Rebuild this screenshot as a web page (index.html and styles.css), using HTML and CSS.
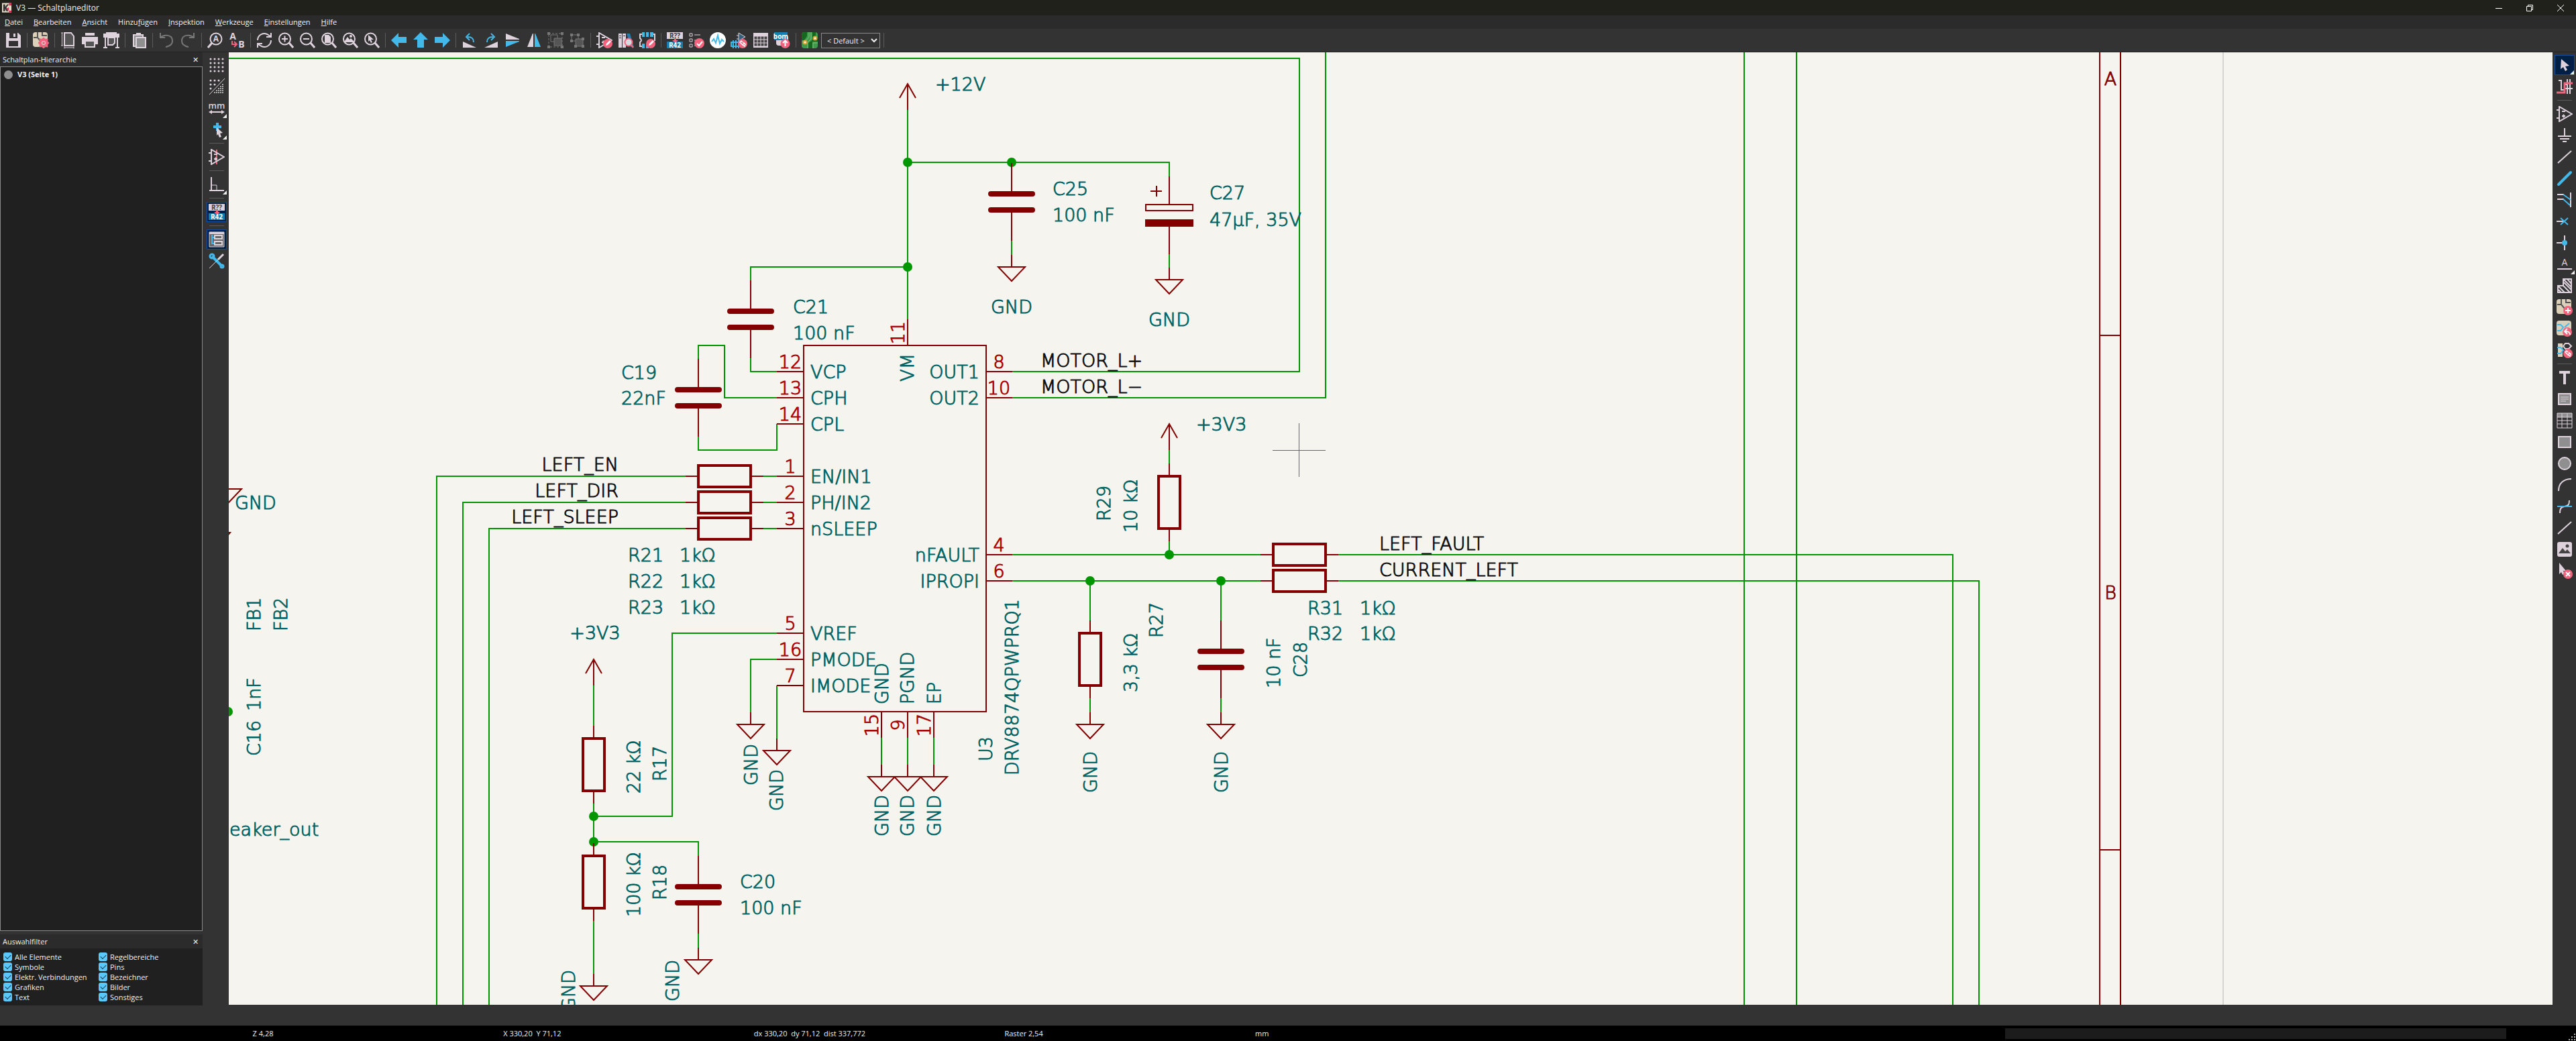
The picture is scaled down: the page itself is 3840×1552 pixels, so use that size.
FILE: index.html
```html
<!DOCTYPE html>
<html lang="de">
<head>
<meta charset="utf-8">
<title>V3 — Schaltplaneditor</title>
<link rel="stylesheet" href="styles.css">
</head>
<body>
<svg class="defs" aria-hidden="true">
  <defs>
    <symbol id="opamp" viewBox="0 0 24 24"><path class="l" d="M4 1v22L23 12zM0 6h4M0 18h4M8 8h5M8 15h5M10.500 12.500v5"/></symbol>
    <symbol id="lens" viewBox="0 0 24 24"><circle class="l" cx="13" cy="10" r="8.500"/><path class="l3" d="M7 16l-6 7"/></symbol>
    <symbol id="lensr" viewBox="0 0 24 24"><circle class="l" cx="10.500" cy="10" r="8.500"/><path class="l3" d="M17 16l6 7"/></symbol>
    <symbol id="annot" viewBox="0 0 24 24"><path class="lf" d="M0 0h24v10H0z"/><path fill="#147fb0" d="M0 14h24v10H0z"/><path class="rf" d="M11 9h3v3h3l-4.500 4L8 12h3z"/><text class="t10 dark" x="12" y="9">R??</text><text class="t10 white" x="12" y="23">R42</text></symbol>
    <symbol id="sheet" viewBox="0 0 24 24"><rect class="bf" width="22" height="22" rx="4"/><path fill="none" stroke="#555" stroke-width="2" d="M7 0v8H1M7 8l5 6h9M14 0v5h7"/></symbol>
    <symbol id="pencil" viewBox="0 0 24 24"><circle class="rf" cx="17" cy="17" r="7"/><path d="M14 20l1-3 5-5 2 2-5 5z" fill="#fff"/></symbol>
    <symbol id="chain" viewBox="0 0 24 24"><circle class="rf" cx="17" cy="17" r="7"/><path fill="none" stroke="#fff" stroke-width="1.500" d="M17 15l-2-2-2 2 4 4 2-2-1-1M17 19l3 2 1-3-3-3"/></symbol>
    <symbol id="pointer" viewBox="0 0 24 24"><path class="lf" d="M7 3l12 10-6 1 3 5-3 2-3-6-4 3z"/></symbol>
    <symbol id="diag" viewBox="0 0 24 24"><path class="l" d="M2 21L22 3"/></symbol>
    <g id="arrow"><path class="sym" d="M0 39V0M-12 21L0 0L12 21"/></g>
    <g id="gnd"><path class="sym" d="M0 0V18M-20 18H20L0 39Z"/></g>
    <g id="cap"><path class="sym" d="M0-58V-12M0 12V58"/><path class="plate" d="M-31-12H31M-31 12H31"/></g>
    <g id="resh"><path class="sym" d="M-58 0H-39M39 0H58"/><rect class="body" x="-39" y="-16" width="78" height="32"/></g>
    <g id="resv"><path class="sym" d="M0-58V-39M0 39V58"/><rect class="body" x="-16" y="-39" width="32" height="78"/></g>
  </defs>
</svg>

<header class="titlebar">
  <svg class="appicon" viewBox="0 0 16 16"><path fill="#e8dcc8" d="M0 0h15v15H0z"/><path fill="#333" d="M2 2h3v4l3-4h3L7 7l3 6H7L5 9v4H2z"/><path fill="#d8305a" d="M11 0h4v4h-4zM6 9l5-2 0 5zM11 12h4v3h-4z"/></svg>
  <h1 class="title">V3 — Schaltplaneditor</h1>
  <div class="winctl">
    <button type="button" aria-label="Minimieren"><svg viewBox="0 0 10 10"><path d="M0 5.500h10"/></svg></button>
    <button type="button" aria-label="Wiederherstellen"><svg viewBox="0 0 10 10"><path d="M.5 2.500h7v7h-7zM2.500 2V.5h7v7H8"/></svg></button>
    <button type="button" aria-label="Schließen"><svg viewBox="0 0 10 10"><path d="M0 0l10 10M10 0L0 10"/></svg></button>
  </div>
</header>

<nav class="menubar">
  <button type="button"><u>D</u>atei</button>
  <button type="button"><u>B</u>earbeiten</button>
  <button type="button"><u>A</u>nsicht</button>
  <button type="button">Hinzu<u>f</u>ügen</button>
  <button type="button"><u>I</u>nspektion</button>
  <button type="button"><u>W</u>erkzeuge</button>
  <button type="button"><u>E</u>instellungen</button>
  <button type="button"><u>H</u>ilfe</button>
</nav>

<div class="toolbar" role="toolbar">
  <button type="button" class="tool" aria-label="Speichern"><svg viewBox="0 0 24 24"><path class="lf" d="M1 1h18l4 4v18H1z"/><path fill="#333" d="M6 1h12v8H6zM5 13h14v8H5z"/><path class="lf" d="M12 2h3v5h-3z"/></svg></button>
  <span class="sep"></span>
  <button type="button" class="tool" aria-label="Schaltplan einrichten"><svg viewBox="0 0 24 24"><use href="#sheet"/><circle cx="16" cy="16" r="5" fill="#ddd" stroke="#f2647e" stroke-width="4"/><path stroke="#f2647e" stroke-width="2.500" d="M16 8v3M16 21v3M8 16h3M21 16h3M10 10l2 2M20 20l2 2M22 10l-2 2M12 20l-2 2"/><circle class="rf" cx="16" cy="16" r="2"/></svg></button>
  <span class="sep"></span>
  <button type="button" class="tool" aria-label="Seite einrichten"><svg viewBox="0 0 24 24"><path class="l" fill="#555" d="M6 1h10l4 5v14H6z"/><path class="l1" d="M1 1h3M1 20h3M2.500 1v19M6 21.500v3M20 21.500v3M6 23h14"/></svg></button>
  <button type="button" class="tool" aria-label="Drucken"><svg viewBox="0 0 24 24"><path class="lf" d="M5 1h14v4H5zM0 7h24v11H0z"/><path class="l" fill="#555" d="M5 13h14v9H5z"/></svg></button>
  <button type="button" class="tool" aria-label="Plotten"><svg viewBox="0 0 24 24"><path class="lf" d="M0 2h24v6H0zM4 0h16v3H4z"/><path class="l" fill="#555" d="M7 8h10v8l-3 3H7z"/><path class="l" d="M3 8v15M21 8v15M0 23h6M18 23h6"/></svg></button>
  <span class="sep"></span>
  <button type="button" class="tool" aria-label="Einfügen"><svg viewBox="0 0 24 24"><path class="l" fill="#8f8f8f" d="M4 4h14v17H4z"/><path class="lf" d="M8 1h7v4H8z"/><path class="l" fill="#8f8f8f" d="M8 8h14v15H8z"/></svg></button>
  <span class="sep"></span>
  <button type="button" class="tool" aria-label="Rückgängig"><svg viewBox="0 0 24 24"><path class="g" d="M3 1v7h7M3 8c5-5 18-5 18 5 0 6-5 8-10 9"/></svg></button>
  <button type="button" class="tool" aria-label="Wiederholen"><svg viewBox="0 0 24 24"><path class="g" d="M21 1v7h-7M21 8C16 3 3 3 3 13c0 6 5 8 10 9"/></svg></button>
  <span class="sep"></span>
  <button type="button" class="tool" aria-label="Suchen"><svg viewBox="0 0 24 24"><use href="#lens"/><text class="t12 light" x="13" y="14">A</text></svg></button>
  <button type="button" class="tool" aria-label="Suchen und Ersetzen"><svg viewBox="0 0 24 24"><text class="t14 light" x="6" y="11">A</text><text class="t14 light" x="19" y="23">B</text><path fill="none" stroke="#f2647e" stroke-width="2" d="M5 13v5h6M8 14l4 4-4 4"/></svg></button>
  <span class="sep"></span>
  <button type="button" class="tool" aria-label="Aktualisieren"><svg viewBox="0 0 24 24"><path class="l" d="M2 12C2 5 9 0 16 3l5 3M22 1v6h-7M22 12c0 7-7 12-14 9l-5-3M2 23v-6h7"/></svg></button>
  <button type="button" class="tool" aria-label="Vergrößern"><svg viewBox="0 0 24 24"><use href="#lensr"/><path class="l" d="M6 10h9M10.500 5.500v9"/></svg></button>
  <button type="button" class="tool" aria-label="Verkleinern"><svg viewBox="0 0 24 24"><use href="#lensr"/><path class="l" d="M6 10h9"/></svg></button>
  <button type="button" class="tool" aria-label="Seite einpassen"><svg viewBox="0 0 24 24"><use href="#lensr"/><path class="lf" d="M6 4h6l3 3v9H6z"/></svg></button>
  <button type="button" class="tool" aria-label="Objekte einpassen"><svg viewBox="0 0 24 24"><use href="#lensr"/><path class="lf" d="M4 13l4-6 3 4 2-2 4 4v2H4z"/><circle class="lf" cx="13" cy="6" r="2"/></svg></button>
  <button type="button" class="tool" aria-label="Auswahl einpassen"><svg viewBox="0 0 24 24"><use href="#lensr"/><path class="lf" d="M7 4l8 7-4 0 2 4-2 1-2-4-2 2z"/></svg></button>
  <span class="sep"></span>
  <button type="button" class="tool" aria-label="Zurück"><svg viewBox="0 0 24 24"><path class="cf" d="M0 12L11 1v6h12v9H11v7z"/></svg></button>
  <button type="button" class="tool" aria-label="Nach oben"><svg viewBox="0 0 24 24"><path class="cf" d="M12 0L23 11h-6v12H7V11H1z"/></svg></button>
  <button type="button" class="tool" aria-label="Vorwärts"><svg viewBox="0 0 24 24"><path class="cf" d="M24 12L13 1v6H1v9h12v7z"/></svg></button>
  <span class="sep"></span>
  <button type="button" class="tool" aria-label="Gegen Uhrzeigersinn drehen"><svg viewBox="0 0 24 24"><path class="lf" d="M2 14v9h20z"/><path class="c" d="M18 15c0-6-3-8-9-8M12 2L7 7l5 5"/></svg></button>
  <button type="button" class="tool" aria-label="Im Uhrzeigersinn drehen"><svg viewBox="0 0 24 24"><path class="lf" d="M22 14v9H2z"/><path class="c" d="M6 15c0-6 3-8 9-8M12 2l5 5-5 5"/></svg></button>
  <button type="button" class="tool" aria-label="Vertikal spiegeln"><svg viewBox="0 0 24 24"><path class="lf" d="M2 2l20 8v1H2z"/><path class="cf" d="M2 22l20-8v-1H2z"/></svg></button>
  <button type="button" class="tool" aria-label="Horizontal spiegeln"><svg viewBox="0 0 24 24"><path class="lf" d="M2 22l8-20h1v20z"/><path class="cf" d="M22 22L14 2h-1v20z"/></svg></button>
  <button type="button" class="tool" aria-label="Gruppieren"><svg viewBox="0 0 24 24"><path class="gd" d="M2 2h20v20H2z"/><path class="g1" d="M5 4h10v10H5z"/><path class="g1" fill="#555" d="M10 9h11v11H10z"/><path class="gf" d="M0 0h4v4H0zM20 0h4v4h-4zM0 20h4v4H0zM20 20h4v4h-4z"/></svg></button>
  <button type="button" class="tool" aria-label="Gruppierung aufheben"><svg viewBox="0 0 24 24"><path class="g1" d="M4 4h10v9H4z"/><path class="g1" fill="#555" d="M10 10h11v11H10z"/><path class="gf" d="M2 2h4v4H2zM12 2h4v4h-4zM2 11h4v4H2zM19 8h4v4h-4zM8 19h4v4H8zM19 19h4v4h-4z"/></svg></button>
  <span class="sep"></span>
  <button type="button" class="tool" aria-label="Symboleditor"><svg viewBox="0 0 24 24"><use href="#opamp"/><use href="#pencil"/></svg></button>
  <button type="button" class="tool" aria-label="Symbolbibliothek"><svg viewBox="0 0 24 24"><path class="lf" d="M1 2h5v21H1zM7 2h5v21H7z"/><path fill="#333" d="M2 5h3v1H2zM8 5h3v1H8zM2 8h3v1H2z"/><path fill="#1c7fae" d="M13 2h5l6 20h-5z"/><circle cx="16" cy="15" r="5.500" fill="#d5dbe2" stroke="#f2647e" stroke-width="2"/><path stroke="#f2647e" stroke-width="2.500" d="M20 19l3 4"/></svg></button>
  <button type="button" class="tool" aria-label="Footprinteditor"><svg viewBox="0 0 24 24"><path class="cf" d="M4 0h4v7H4zM10 0h4v7h-4zM16 0h5v7h-5zM4 17h4v7H4zM10 17h4v7h-4z"/><path class="l" d="M4 3H1v6q4 3 0 6v6h3M21 3h2v10"/><use href="#pencil"/></svg></button>
  <span class="sep"></span>
  <button type="button" class="tool" aria-label="Annotieren"><svg viewBox="0 0 24 24"><use href="#annot"/></svg></button>
  <button type="button" class="tool" aria-label="ERC"><svg viewBox="0 0 24 24"><path class="l1" d="M2 2h4v4H2zM2 10h4v4H2zM2 18h4v4H2zM9 4h9M9 12h5M9 20h4"/><circle class="rf" cx="16.500" cy="16.500" r="7.500"/><path fill="none" stroke="#fff" stroke-width="2" d="M13 17l3 3 5-6"/></svg></button>
  <button type="button" class="tool" aria-label="Simulator"><svg viewBox="0 0 24 24"><circle cx="12" cy="12" r="12" fill="#fff"/><path class="c1" d="M3 14l3-4 3 6 3-11 3 12 3-6 3 3"/></svg></button>
  <button type="button" class="tool" aria-label="Footprints zuweisen"><svg viewBox="0 0 24 24"><path class="l1" fill="#35607a" d="M11 1v12l10-6zM8 5h3M8 10h3"/><path class="cf" d="M2 12h2v12H2zM6 12h2v12H6zM10 12h2v12h-2z"/><path class="c1" d="M0 15h12v6H0z"/><use href="#chain"/></svg></button>
  <button type="button" class="tool" aria-label="Symbolfelder bearbeiten"><svg viewBox="0 0 24 24"><path class="lf" d="M1 1h22v22H1z"/><path fill="none" stroke="#444" stroke-width="4" stroke-dasharray="4 1" d="M2.500 8.500h19M2.500 13.500h19M2.500 18.500h19"/></svg></button>
  <button type="button" class="tool" aria-label="Stückliste"><svg viewBox="0 0 24 24"><rect class="lf" x="3" y="5" width="18" height="15" rx="4"/><path fill="#147fb0" d="M0 0h20v12H0z"/><text class="t10 white" x="10" y="10">bom</text><circle class="rf" cx="16.500" cy="17" r="7"/><path fill="none" stroke="#fff" stroke-width="2" d="M16.500 21v-8M13 16l3.500-3.500L20 16"/></svg></button>
  <span class="sep"></span>
  <button type="button" class="tool" aria-label="Leiterplatteneditor"><svg viewBox="0 0 24 24"><rect width="24" height="24" rx="4" fill="#3f9a4c"/><path fill="#15691f" d="M0 4q0-4 4-4h4v6L4 12H0zM10 24v-8l6-4V0h5v8h3v6h-8v10z"/><path fill="none" stroke="#7cc07a" d="M11 0v7l-5 6M14 0v10l-5 5v9M17 24v-8h7"/><circle cx="5" cy="15" r="2.500" fill="#fff" stroke="#e0a030" stroke-width="2"/><circle cx="20" cy="9" r="2.500" fill="#fff" stroke="#e0a030" stroke-width="2"/></svg></button>
  <select class="variant" aria-label="Variante"><option>&lt; Default &gt;</option></select>
  <span class="sep"></span>
</div>

<main class="work">
  <aside class="panels">
    <section class="panel tree-panel">
      <header class="caption"><h2>Schaltplan-Hierarchie</h2><button type="button" aria-label="Schließen">✕</button></header>
      <ul class="tree"><li><span class="bullet"></span>V3 (Seite 1)</li></ul>
    </section>
    <section class="panel">
      <header class="caption"><h2>Auswahlfilter</h2><button type="button" aria-label="Schließen">✕</button></header>
      <div class="filters">
        <label><input type="checkbox" checked>Alle Elemente</label>
        <label><input type="checkbox" checked>Regelbereiche</label>
        <label><input type="checkbox" checked>Symbole</label>
        <label><input type="checkbox" checked>Pins</label>
        <label><input type="checkbox" checked>Elektr. Verbindungen</label>
        <label><input type="checkbox" checked>Bezeichner</label>
        <label><input type="checkbox" checked>Grafiken</label>
        <label><input type="checkbox" checked>Bilder</label>
        <label><input type="checkbox" checked>Text</label>
        <label><input type="checkbox" checked>Sonstiges</label>
      </div>
    </section>
  </aside>

  <div class="sidebar left" role="toolbar">
    <button type="button" class="tool" aria-label="Raster"><svg viewBox="0 0 24 24"><path class="dots" d="M3 3h21M3 9h21M3 15h21M3 21h21"/></svg></button>
    <button type="button" class="tool" aria-label="Rasterüberschreibung"><svg viewBox="0 0 24 24"><path class="dots" d="M3 3h13M3 9h8M3 15h2"/><path class="l1" d="M1 24L24 0"/><path fill="none" stroke="#aaa" stroke-width="2" stroke-dasharray="2 1" d="M20 9h3M17 12h6M14 15h9M11 18h12M8 21h15"/></svg></button>
    <button type="button" class="tool more" aria-label="Einheiten"><svg viewBox="0 0 24 24"><text class="t13 light" x="12" y="13">mm</text><path class="l" d="M2 18h20"/><path class="lf" d="M0 18l5-3v6zM24 18l-5-3v6z"/></svg></button>
    <button type="button" class="tool more" aria-label="Fadenkreuz"><svg viewBox="0 0 24 24"><path class="c3" d="M7 8h12M13 2v12"/><path class="lf" d="M12 9l9 8-4 1 2 5-3 1-2-5-2 2z"/></svg></button>
    <span class="sep"></span>
    <button type="button" class="tool" aria-label="Versteckte Pins"><svg viewBox="0 0 24 24"><path stroke="#f2647e" stroke-width="2" d="M12 1v22"/><use href="#opamp"/></svg></button>
    <span class="sep"></span>
    <button type="button" class="tool more" aria-label="Linienmodus"><svg viewBox="0 0 24 24"><path class="l" d="M4 1v20M1 21h22"/><path class="l1" d="M4 13h8v8"/></svg></button>
    <span class="sep"></span>
    <button type="button" class="tool on" aria-label="Automatisch annotieren"><svg viewBox="0 0 24 24"><use href="#annot"/></svg></button>
    <span class="sep"></span>
    <button type="button" class="tool on" aria-label="Hierarchie anzeigen"><svg viewBox="0 0 24 24"><path class="l1" fill="#666" d="M1 1h22v22H1z"/><path class="lf" d="M1 1h22v3H1z"/><path class="c" d="M5 5v13h4M5 9h4"/><path class="l" d="M9 6h11v5H9zM9 15h11v5H9z"/></svg></button>
    <button type="button" class="tool" aria-label="Eigenschaften"><svg viewBox="0 0 24 24"><path stroke="#42b8eb" stroke-width="4" d="M5 5l15 15"/><circle cx="5" cy="5" r="3" fill="none" stroke="#42b8eb" stroke-width="3"/><circle cx="20" cy="20" r="2" fill="none" stroke="#42b8eb" stroke-width="3"/><path class="l1" d="M1 23L14 10"/><path class="l3" d="M14 10l8-8"/></svg></button>
  </div>

  <div class="canvas">
    <svg class="schematic" role="img" aria-label="Schaltplan">
      <g transform="translate(-341 -78)">
        <path class="edge" d="M3314 0V4000"/>
        <g class="frame">
          <path d="M3130 0V4000M3161 0V4000M3130 500H3161M3130 1267H3161"/>
        </g>
        <g class="wire">
          <path d="M300 87H1937V554H1509M1976 0V593H1509"/>
          <path d="M2600 0V4000M2678 0V4000"/>
          <path d="M1353 164V476M1353 242H1743V263M1508 359V380M1743 379V400"/>
          <path d="M1353 398H1119V420M1119 534V554H1158"/>
          <path d="M1041 535V515H1080V593H1158M1041 651V671H1158V632"/>
          <path d="M1022 710H651V4000M1022 749H690V4000M1022 788H729V4000"/>
          <path d="M1137 710H1158M1137 749H1158M1137 788H1158"/>
          <path d="M1158 944H1002V1217H885M1158 983H1119V1062M1158 1022V1101"/>
          <path d="M1314 1100V1140M1353 1100V1140M1392 1100V1140"/>
          <path d="M885 1022V1082M885 1196V1257M885 1255H1041V1276M885 1371V1452M1041 1392V1413"/>
          <path d="M1509 827H1879M1995 827H2911V4000M1509 866H1879M1995 866H2950V4000"/>
          <path d="M1743 671V691M1743 806V827M1625 866V925M1625 1041V1062M1820 866V925M1820 1041V1062"/>
        </g>
        <g class="dot">
          <circle cx="1353" cy="242" r="7"/><circle cx="1508" cy="242" r="7"/><circle cx="1353" cy="398" r="7"/>
          <circle cx="885" cy="1217" r="7"/><circle cx="885" cy="1255" r="7"/><circle cx="1743" cy="827" r="7"/>
          <circle cx="1625" cy="866" r="7"/><circle cx="1820" cy="866" r="7"/><circle cx="340" cy="1061" r="7"/>
        </g>
        <rect class="sym" x="1198" y="515" width="272" height="546"/>
        <path class="sym" d="M1353 476V515M1158 554H1198M1158 593H1198M1158 632H1198M1158 710H1198M1158 749H1198M1158 788H1198M1158 944H1198M1158 983H1198M1158 1022H1198M1470 554H1509M1470 593H1509M1470 827H1509M1470 866H1509M1314 1061V1100M1353 1061V1100M1392 1061V1100"/>
        <use href="#arrow" x="1353" y="125"/><use href="#arrow" x="885" y="983"/><use href="#arrow" x="1743" y="632"/>
        <use href="#cap" x="1508" y="301"/><use href="#cap" x="1119" y="476"/><use href="#cap" x="1041" y="593"/>
        <use href="#cap" x="1041" y="1334"/><use href="#cap" x="1820" y="983"/>
        <path class="sym" d="M1743 263V305M1743 338V379M1715 285H1732M1724 277V293M1708 305H1778V314H1708Z"/>
        <path class="solid" d="M1707 327H1779V338H1707Z"/>
        <use href="#resh" x="1080" y="710"/><use href="#resh" x="1080" y="749"/><use href="#resh" x="1080" y="788"/>
        <use href="#resh" x="1937" y="827"/><use href="#resh" x="1937" y="866"/>
        <use href="#resv" x="885" y="1140"/><use href="#resv" x="885" y="1315"/><use href="#resv" x="1743" y="749"/><use href="#resv" x="1625" y="983"/>
        <use href="#gnd" x="1508" y="380"/><use href="#gnd" x="1743" y="399"/><use href="#gnd" x="1119" y="1062"/><use href="#gnd" x="1158" y="1101"/>
        <use href="#gnd" x="1314" y="1140"/><use href="#gnd" x="1353" y="1140"/><use href="#gnd" x="1392" y="1140"/>
        <use href="#gnd" x="885" y="1452"/><use href="#gnd" x="1041" y="1413"/><use href="#gnd" x="1625" y="1062"/><use href="#gnd" x="1820" y="1062"/>
        <use href="#gnd" x="340" y="711"/><path class="sym" d="M338 794H343L338 800"/>

        <g class="field">
          <text x="1394" y="135">+12V</text>
          <text x="1569" y="291">C25</text><text x="1569" y="330">100 nF</text>
          <text x="1803" y="297">C27</text><text x="1803" y="337">47µF, 35V</text>
          <text x="1182" y="467">C21</text><text x="1182" y="506">100 nF</text>
          <text x="926" y="565">C19</text><text x="926" y="603">22nF</text>
          <text x="1508" y="467" class="mid">GND</text><text x="1743" y="486" class="mid">GND</text>
          <text x="1208" y="564">VCP</text><text x="1208" y="603">CPH</text><text x="1208" y="642">CPL</text>
          <text x="1208" y="720">EN/IN1</text><text x="1208" y="759">PH/IN2</text><text x="1208" y="798">nSLEEP</text>
          <text x="1208" y="954">VREF</text><text x="1208" y="993">PMODE</text><text x="1208" y="1032">IMODE</text>
          <text x="1460" y="564" class="end">OUT1</text><text x="1460" y="603" class="end">OUT2</text>
          <text x="1460" y="837" class="end">nFAULT</text><text x="1460" y="876" class="end">IPROPI</text>
          <text x="936" y="837">R21</text><text x="1013" y="837">1kΩ</text>
          <text x="936" y="876">R22</text><text x="1013" y="876">1kΩ</text>
          <text x="936" y="915">R23</text><text x="1013" y="915">1kΩ</text>
          <text x="887" y="953" class="mid">+3V3</text><text x="1783" y="642">+3V3</text>
          <text x="1103" y="1324">C20</text><text x="1103" y="1363">100 nF</text>
          <text x="1949" y="916">R31</text><text x="2027" y="916">1kΩ</text>
          <text x="1949" y="954">R32</text><text x="2027" y="954">1kΩ</text>
          <text x="350" y="759">GND</text><text x="342" y="1246">eaker_out</text>
          <text transform="translate(1362 527) rotate(-90)" class="end">VM</text>
          <text transform="translate(1324 1050) rotate(-90)">GND</text>
          <text transform="translate(1362 1050) rotate(-90)">PGND</text>
          <text transform="translate(1402 1050) rotate(-90)">EP</text>
          <text transform="translate(1479 1135) rotate(-90)">U3</text>
          <text transform="translate(1518 1156) rotate(-90)">DRV8874QPWPRQ1</text>
          <text transform="translate(1129 1140) rotate(-90)" class="mid">GND</text>
          <text transform="translate(1167 1178) rotate(-90)" class="mid">GND</text>
          <text transform="translate(1324 1216) rotate(-90)" class="mid">GND</text>
          <text transform="translate(1362 1216) rotate(-90)" class="mid">GND</text>
          <text transform="translate(1402 1216) rotate(-90)" class="mid">GND</text>
          <text transform="translate(1012 1462) rotate(-90)" class="mid">GND</text>
          <text transform="translate(857 1477) rotate(-90)" class="mid">GND</text>
          <text transform="translate(1635 1151) rotate(-90)" class="mid">GND</text>
          <text transform="translate(1830 1151) rotate(-90)" class="mid">GND</text>
          <text transform="translate(954 1183) rotate(-90)">22 kΩ</text>
          <text transform="translate(993 1165) rotate(-90)">R17</text>
          <text transform="translate(954 1367) rotate(-90)">100 kΩ</text>
          <text transform="translate(993 1342) rotate(-90)">R18</text>
          <text transform="translate(1655 777) rotate(-90)">R29</text>
          <text transform="translate(1695 794) rotate(-90)">10 kΩ</text>
          <text transform="translate(1733 951) rotate(-90)">R27</text>
          <text transform="translate(1695 1032) rotate(-90)">3,3 kΩ</text>
          <text transform="translate(1908 1026) rotate(-90)">10 nF</text>
          <text transform="translate(1948 1010) rotate(-90)">C28</text>
          <text transform="translate(388 941) rotate(-90)">FB1</text>
          <text transform="translate(428 941) rotate(-90)">FB2</text>
          <text transform="translate(388 1127) rotate(-90)">C16</text>
          <text transform="translate(388 1060) rotate(-90)">1nF</text>
        </g>
        <g class="pin mid">
          <text x="1178" y="549">12</text><text x="1178" y="588">13</text><text x="1178" y="627">14</text>
          <text x="1178" y="705">1</text><text x="1178" y="744">2</text><text x="1178" y="783">3</text>
          <text x="1178" y="939">5</text><text x="1178" y="978">16</text><text x="1178" y="1017">7</text>
          <text x="1489" y="549">8</text><text x="1489" y="588">10</text><text x="1489" y="822">4</text><text x="1489" y="861">6</text>
          <text transform="translate(1348 496) rotate(-90)">11</text>
          <text transform="translate(1309 1081) rotate(-90)">15</text>
          <text transform="translate(1348 1081) rotate(-90)">9</text>
          <text transform="translate(1387 1081) rotate(-90)">17</text>
        </g>
        <g class="net">
          <text x="1551" y="547">MOTOR_L+</text><text x="1551" y="586">MOTOR_L−</text>
          <text x="922" y="702" class="end">LEFT_EN</text><text x="922" y="741" class="end">LEFT_DIR</text><text x="922" y="780" class="end">LEFT_SLEEP</text>
          <text x="2056" y="820">LEFT_FAULT</text><text x="2056" y="859">CURRENT_LEFT</text>
        </g>
        <g class="zone mid"><text x="3146" y="127">A</text><text x="3146" y="893">B</text></g>
        <path class="cursor" d="M1897 671.500H1976M1936.500 631V711"/>
      </g>
    </svg>
  </div>

  <div class="sidebar right" role="toolbar">
    <button type="button" class="tool on more" aria-label="Auswählen"><svg viewBox="0 0 24 24"><use href="#pointer"/></svg></button>
    <button type="button" class="tool" aria-label="Netz hervorheben"><svg viewBox="0 0 24 24"><path class="l" d="M3 3h4v14h5M16 1v22M20 1v22M12 15h12M12 9h4"/><path fill="none" stroke="#f2647e" stroke-width="3" d="M0 21h12V7h12"/></svg></button>
    <span class="sep"></span>
    <button type="button" class="tool" aria-label="Symbole"><svg viewBox="0 0 24 24"><use href="#opamp"/></svg></button>
    <button type="button" class="tool" aria-label="Spannung"><svg viewBox="0 0 24 24"><path class="l" d="M12 1v12M2 13h20M5 17h14M9 21h6"/></svg></button>
    <button type="button" class="tool" aria-label="Verbindung"><svg viewBox="0 0 24 24"><use href="#diag"/></svg></button>
    <button type="button" class="tool" aria-label="Bus"><svg viewBox="0 0 24 24"><path class="c3" stroke-linecap="round" d="M3 21L21 3"/></svg></button>
    <button type="button" class="tool" aria-label="Bus-Eingang"><svg viewBox="0 0 24 24"><path class="l" d="M1 4h10M1 11h10M21 1v22"/><path class="c" d="M10 4l11 8M10 11l10 9"/></svg></button>
    <button type="button" class="tool" aria-label="Nicht verbunden"><svg viewBox="0 0 24 24"><path class="l" d="M0 12h10"/><path class="c" d="M6 7l11 10M17 7L6 17"/></svg></button>
    <button type="button" class="tool" aria-label="Verbindungspunkt"><svg viewBox="0 0 24 24"><path class="l" d="M0 12h12M12 1v22"/><circle class="cf" cx="12" cy="12" r="4"/></svg></button>
    <button type="button" class="tool more" aria-label="Netzbezeichner"><svg viewBox="0 0 24 24"><text class="t14 light thin" x="12" y="14">A</text><path class="l" d="M1 19h22"/></svg></button>
    <button type="button" class="tool" aria-label="Regelbereich"><svg viewBox="0 0 24 24"><path class="l" d="M2 22V12h8V2h12v20zM3 13l9 9M3 18l4 4M10 12l10 10M11 7l11 11M11 3l11 11M16 2l6 7"/></svg></button>
    <button type="button" class="tool" aria-label="Blatt zeichnen"><svg viewBox="0 0 24 24"><use href="#sheet"/><circle class="rf" cx="17" cy="17" r="7"/><path stroke="#fff" stroke-width="2" d="M13 17h8M17 13v8"/></svg></button>
    <button type="button" class="tool" aria-label="Blattpins importieren"><svg viewBox="0 0 24 24"><rect class="bf" width="22" height="22" rx="4"/><path class="c1" d="M1 6h5l4 4-4 5H1M12 10l7-6"/><circle class="rf" cx="16" cy="17" r="7"/><path fill="none" stroke="#fff" stroke-width="2" d="M20 21c0-4-2-5-7-5M16 12l-4 4 4 4"/></svg></button>
    <button type="button" class="tool" aria-label="Blattpins synchronisieren"><svg viewBox="0 0 24 24"><path class="bf" d="M2 2h7v20H2z"/><path class="c1" d="M1 8h5l4 4-4 5H1"/><path class="l" d="M10 6l3-4h5l4 4-4 4h-5z"/><use href="#chain"/></svg></button>
    <span class="sep"></span>
    <button type="button" class="tool" aria-label="Text"><svg viewBox="0 0 24 24"><path class="lf" d="M4 2h16v4h-6v16h-4V6H4z"/></svg></button>
    <button type="button" class="tool" aria-label="Textfeld"><svg viewBox="0 0 24 24"><path class="l" fill="#8f8f8f" d="M3 4h18v16H3z"/><path class="l1" d="M6 9h12M6 12h12M6 15h8"/></svg></button>
    <button type="button" class="tool" aria-label="Tabelle"><svg viewBox="0 0 24 24"><path fill="#8f8f8f" d="M1 1h22v6H1z"/><path class="l1" d="M1 1h22v22H1zM1 7h22M1 12h22M1 17h22M8 1v22M16 1v22"/></svg></button>
    <button type="button" class="tool" aria-label="Rechteck"><svg viewBox="0 0 24 24"><path class="l" fill="#8f8f8f" d="M3 4h18v16H3z"/></svg></button>
    <button type="button" class="tool" aria-label="Kreis"><svg viewBox="0 0 24 24"><circle class="l" fill="#8f8f8f" cx="12" cy="12" r="9"/></svg></button>
    <button type="button" class="tool" aria-label="Bogen"><svg viewBox="0 0 24 24"><path class="l" d="M3 21C3 9 11 3 22 3"/></svg></button>
    <button type="button" class="tool" aria-label="Bézierkurve"><svg viewBox="0 0 24 24"><path class="l" d="M5 22c0-6 1-9 7-10s7-3 7-9"/><path class="c" d="M1 12h22"/></svg></button>
    <button type="button" class="tool" aria-label="Linie"><svg viewBox="0 0 24 24"><use href="#diag"/></svg></button>
    <button type="button" class="tool" aria-label="Bild"><svg viewBox="0 0 24 24"><rect class="lf" x="1" y="1" width="22" height="22" rx="3"/><path fill="#444" d="M3 18l6-8 4 5 3-3 5 6z"/><circle fill="#444" cx="16" cy="7" r="2.500"/></svg></button>
    <button type="button" class="tool" aria-label="Löschen"><svg viewBox="0 0 24 24"><path class="lf" d="M4 0l10 12-4 0 2 4-3 2-2-4-3 3z"/><circle class="rf" cx="17" cy="17" r="7"/><path stroke="#fff" stroke-width="2" d="M14 14l6 6M20 14l-6 6"/></svg></button>
  </div>
</main>

<footer class="status">
  <span></span><span>Z 4,28</span><span>X 330,20&nbsp; Y 71,12</span><span>dx 330,20&nbsp; dy 71,12&nbsp; dist 337,772</span><span>Raster 2,54</span><span>mm</span><span></span><span></span>
  <span class="gauge"></span>
  <svg class="grip" viewBox="0 0 10 10"><path d="M8 0h2v2H8zM4 4h2v2H4zM8 4h2v2H8zM0 8h2v2H0zM4 8h2v2H4zM8 8h2v2H8z"/></svg>
</footer>
</body>
</html>
```
FILE: styles.css
```css
* { box-sizing: border-box; }

body {
  margin: 0;
  height: 100vh;
  display: flex;
  flex-direction: column;
  overflow: hidden;
  background: #333;
  color: #f0f0f0;
  font: 11px/16px "Open Sans", "Noto Sans", sans-serif;
}

button, select {
  font: inherit;
  color: inherit;
  border: 0;
  padding: 0;
  background: none;
}

h1, h2 { margin: 0; font: inherit; }
.defs { position: absolute; width: 0; height: 0; }

/* title bar and menu */
.titlebar {
  display: flex;
  align-items: center;
  height: 23px;
  padding-left: 3px;
  background: #20211a;
}
.appicon { width: 15px; height: 20px; }
.title { margin-left: 6px; font-size: 12px; }
.winctl { display: flex; margin-left: auto; }
.winctl button {
  width: 46px;
  height: 22px;
  display: grid;
  place-items: center;
}
.winctl svg { width: 10px; height: 10px; fill: none; stroke: #fff; }

.menubar {
  display: flex;
  gap: 2px;
  height: 20px;
  background: #2b2b2b;
}
.menubar button { padding: 0 7px; }

/* tool bars */
.toolbar {
  display: flex;
  align-items: center;
  gap: 2px;
  height: 35px;
  padding-left: 5px;
  border-bottom: 1px solid #222;
}
.sidebar {
  display: flex;
  flex-direction: column;
  align-items: center;
  gap: 2px;
  padding-top: 4px;
}
.left { width: 39px; padding-left: 3px; }
.right { width: 35px; }
.tool {
  position: relative;
  flex: none;
  width: 30px;
  height: 30px;
  display: grid;
  place-items: center;
}
.tool > svg { width: 24px; height: 24px; overflow: visible; }
.on { background: #001f45; border: 1px solid #0f4f9c; }
.more::after {
  content: "";
  position: absolute;
  right: 0;
  bottom: 0;
  border: 3px solid transparent;
  border-right-color: #eee;
  border-bottom-color: #eee;
}
.sep { flex: none; background: #5a5a5a; }
.toolbar .sep { width: 1px; height: 22px; margin: 0 3px; }
.sidebar .sep { width: 22px; height: 1px; margin: 3px 0; }

.variant {
  width: 88px;
  height: 23px;
  padding: 0 4px;
  border: 1px solid #8a8a8a;
  background: #333;
}

/* icon strokes and fills */
.l, .l1, .l3 { stroke: #ded3dd; stroke-width: 2; }
.l1 { stroke-width: 1; }
.l3 { stroke-width: 3; }
.l:not([fill]), .l1:not([fill]), .l3 { fill: none; }
.lf { fill: #ded3dd; }
.c, .c1, .c3 { fill: none; stroke: #42b8eb; stroke-width: 2; }
.c3 { stroke-width: 4; }
.cf { fill: #42b8eb; }
.rf { fill: #f2647e; }
.bf { fill: #dcd0b8; }
.g, .g1, .gd { stroke: #777; stroke-width: 2; }
.g1, .gd { stroke-width: 1; }
.gd { stroke-dasharray: 3 2; }
.g:not([fill]), .g1:not([fill]), .gd { fill: none; }
.gf { fill: #777; }
.dots { fill: none; stroke: #ded3dd; stroke-width: 3; stroke-linecap: round; stroke-dasharray: 0 6; }
.t10, .t12, .t13, .t14 { font-weight: 700; font-size: 10px; text-anchor: middle; }
.t12 { font-size: 12px; }
.t13 { font-size: 13px; font-weight: 600; }
.t14 { font-size: 14px; }
.thin { font-weight: 400; }
.light { fill: #ded3dd; }
.dark { fill: #444; }
.white { fill: #fff; }

/* work area */
.work { display: flex; flex: 1; min-height: 0; }
.panels {
  width: 302px;
  display: flex;
  flex-direction: column;
  gap: 5px;
  padding-bottom: 30px;
}
.panel { display: flex; flex-direction: column; background: #202020; }
.tree-panel { flex: 1; }
.caption {
  display: flex;
  align-items: center;
  justify-content: space-between;
  height: 21px;
  padding: 0 6px 0 4px;
  background: #2b2b2b;
}
.tree {
  flex: 1;
  margin: 0;
  padding: 3px 5px;
  list-style: none;
  border: 1px solid #8a8a8a;
  font-weight: 700;
}
.tree li { display: flex; align-items: center; gap: 7px; }
.bullet { width: 13px; height: 13px; border-radius: 50%; background: #8f8f8f; }
.filters {
  display: grid;
  grid-template-columns: 142px 1fr;
  grid-auto-rows: 15px;
  padding: 5px;
}
.filters label { display: flex; align-items: center; gap: 4px; }
.filters input {
  appearance: none;
  width: 13px;
  height: 13px;
  margin: 0;
  border-radius: 3px;
  background: #5ac8fa;
  display: grid;
  place-items: center;
}
.filters input:checked::before {
  content: "";
  width: 7px;
  height: 4px;
  border: solid #143a50;
  border-width: 0 0 1px 1px;
  rotate: -45deg;
  margin-bottom: 2px;
}

/* schematic */
.canvas {
  flex: 1;
  min-width: 0;
  margin-bottom: 31px;
  background: #f5f4ef;
}
.schematic { display: block; width: 100%; height: 100%; }
.wire { fill: none; stroke: #009600; stroke-width: 2; }
.dot { fill: #009600; }
.sym { fill: none; stroke: #840000; stroke-width: 2; }
.solid { fill: #840000; }
.plate { stroke: #840000; stroke-width: 8; stroke-linecap: round; }
.body { fill: none; stroke: #840000; stroke-width: 4; }
.frame { fill: none; stroke: #840000; stroke-width: 2; }
.edge { stroke: #b4b4b4; }
.cursor { stroke: #666; }

/* lettering drawn with a round pen */
.field, .pin, .net, .zone {
  font: 200 27px "DejaVu Sans Light", "DejaVu Sans", sans-serif;
  stroke-width: 1px;
  stroke-linejoin: round;
}
.field { fill: #006464; stroke: #006464; }
.pin { fill: #a90000; stroke: #a90000; }
.net { fill: #0f0f0f; stroke: #0f0f0f; }
.zone { fill: #840000; stroke: #840000; }
.mid { text-anchor: middle; }
.end { text-anchor: end; }

/* status bar */
.status {
  display: grid;
  grid-template-columns: repeat(8, 1fr) 2fr 104px;
  align-items: center;
  height: 23px;
  background: #000;
}
.status span { padding-left: 3px; white-space: nowrap; }
.status .gauge { height: 16px; background: #1c1c1c; }
.grip { justify-self: end; align-self: end; width: 10px; height: 10px; margin: 1px; fill: #aaa; }
```
